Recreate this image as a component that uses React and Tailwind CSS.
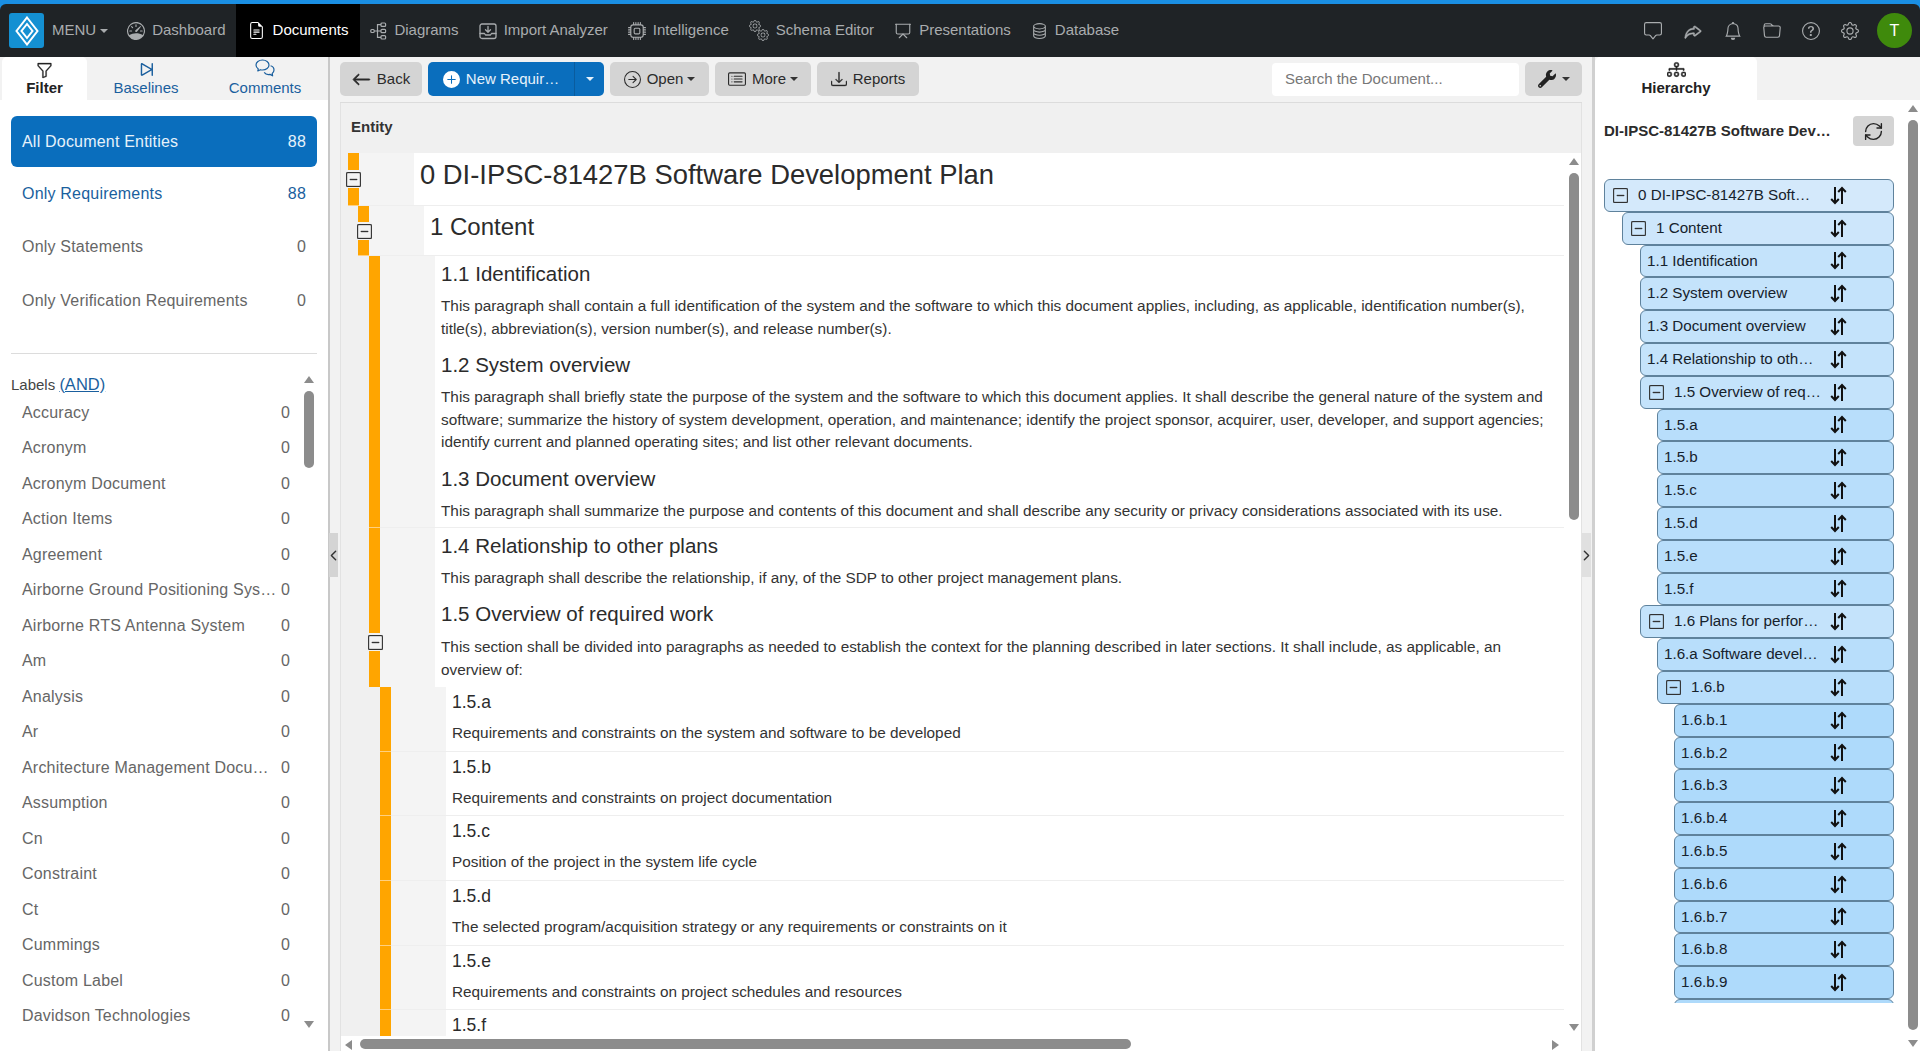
import React from 'react';
import {
    BsArrowLeft, BsArrowRightCircle, BsBell, BsCardList, BsChatSquare, BsCpu, BsDashSquare,
    BsDatabase, BsDiagram3, BsDownload, BsFileEarmarkText, BsFolder, BsFunnel, BsGear, BsPlusCircleFill,
    BsQuestionCircle, BsReply, BsSkipEnd, BsSpeedometer,
} from 'react-icons/bs';
import { FaWrench } from 'react-icons/fa';
import { LuChevronLeft, LuChevronRight, LuPresentation, LuRefreshCw } from 'react-icons/lu';

const labels = ['Accuracy', 'Acronym', 'Acronym Document', 'Action Items', 'Agreement', 'Airborne Ground Positioning Sys…',
    'Airborne RTS Antenna System', 'Am', 'Analysis', 'Ar', 'Architecture Management Docu…', 'Assumption', 'Cn', 'Constraint',
    'Ct', 'Cummings', 'Custom Label', 'Davidson Technologies'];

const tree = [
    [0, '0 DI-IPSC-81427B Soft…', true], [1, '1 Content', true], [2, '1.1 Identification'], [2, '1.2 System overview'],
    [2, '1.3 Document overview'], [2, '1.4 Relationship to oth…'], [2, '1.5 Overview of req…', true], [3, '1.5.a'], [3, '1.5.b'],
    [3, '1.5.c'], [3, '1.5.d'], [3, '1.5.e'], [3, '1.5.f'], [2, '1.6 Plans for perfor…', true], [3, '1.6.a Software devel…'],
    [3, '1.6.b', true], [4, '1.6.b.1'], [4, '1.6.b.2'], [4, '1.6.b.3'], [4, '1.6.b.4'], [4, '1.6.b.5'], [4, '1.6.b.6'],
    [4, '1.6.b.7'], [4, '1.6.b.8'], [4, '1.6.b.9'],
];

const treeLevel = [
    'ml-[0px] bg-[#d4e9fb]',
    'ml-[18px] bg-[#cde6fb]',
    'ml-[36px] bg-[#c4e3fb]',
    'ml-[53px] bg-[#b8defb]',
    'ml-[70px] bg-[#aedafb]',
];

const docLevel = ['pl-[7px]', 'pl-[17px]', 'pl-[28px]', 'pl-[39px]'];

const subItems = [
    ['1.5.a', 'Requirements and constraints on the system and software to be developed'],
    ['1.5.b', 'Requirements and constraints on project documentation'],
    ['1.5.c', 'Position of the project in the system life cycle'],
    ['1.5.d', 'The selected program/acquisition strategy or any requirements or constraints on it'],
    ['1.5.e', 'Requirements and constraints on project schedules and resources'],
    ['1.5.f', ''],
];

function Caret({ className = '' }) {
    return <span className={'inline-block w-0 h-0 border-l-[4px] border-r-[4px] border-t-[4px] border-l-transparent border-r-transparent ' + className} />;
}

function Logo() {
    return (
        <div className="w-[35px] h-[35px] ml-[9px] bg-[#1490d2] rounded-[3px] flex items-center justify-center">
            <svg width="24" height="30" viewBox="0 0 24 30" fill="none" stroke="white" strokeWidth="2">
                <path d="M12 1.5 L22.5 15 L12 28.5 L1.5 15 Z" />
                <path d="M12 8 L17.5 15 L12 22 L6.5 15 Z" />
            </svg>
        </div>
    );
}

function DiagramIcon() {
    return (
        <svg width="17" height="18" viewBox="0 0 17 18" fill="none" stroke="currentColor" strokeWidth="1.2">
            <rect x="0.8" y="7.5" width="3.4" height="3" rx="1" />
            <rect x="11" y="1" width="4.6" height="3.4" rx="1" />
            <rect x="11" y="7.3" width="4.6" height="3.4" rx="1" />
            <rect x="11" y="13.6" width="4.6" height="3.4" rx="1" />
            <path d="M4.2 9 H11 M7.5 9 V2.7 H11 M7.5 9 V15.3 H11" />
        </svg>
    );
}

function ImportIcon() {
    return (
        <svg width="18" height="18" viewBox="0 0 18 18" fill="none" stroke="currentColor" strokeWidth="1.3" strokeLinecap="round" strokeLinejoin="round">
            <rect x="1" y="2" width="16" height="14.5" rx="2" />
            <path d="M1 11.5 H5.5 L6.5 13 H11.5 L12.5 11.5 H17 M9 4.5 V10 M6.5 7.8 L9 10.3 L11.5 7.8" />
        </svg>
    );
}

function GearsIcon() {
    return (
        <span className="flex w-[20px] h-[21px]">
            <BsGear size={12} className="shrink-0" />
            <BsGear size={12} className="shrink-0 mt-[9px] -ml-[4px]" />
        </span>
    );
}

function CommentsIcon() {
    return (
        <svg width="20" height="20" viewBox="0 0 20 20" fill="none" stroke="#1a5f9e" strokeWidth="1.2" strokeLinejoin="round">
            <path d="M7.5 1 C3.8 1 1 3.2 1 6 C1 7.6 1.9 9 3.3 9.9 L2.8 12 L5.4 10.7 C6 10.9 6.8 11 7.5 11 C11.2 11 14 8.8 14 6 C14 3.2 11.2 1 7.5 1 Z" />
            <path d="M15.6 6.8 C17.9 7.5 19 9 19 11 C19 12.4 18.3 13.6 17.2 14.4 L17.6 16.8 L15 15.4 C12.8 15.8 10.4 15.2 9.2 13.4" />
        </svg>
    );
}

function SortIcon() {
    return (
        <svg width="17" height="19" viewBox="0 0 17 19" fill="none" stroke="#111" strokeWidth="2" className="mr-[46px] shrink-0">
            <path d="M5 1 V17 M1.2 13 L5 17 L8.8 13" />
            <path d="M12 18 V2 M8.2 6 L12 2 L15.8 6" />
        </svg>
    );
}

function NavItem({ icon, label, active }) {
    return (
        <div className={active
            ? 'h-full flex items-center gap-[8px] px-[12px] bg-black text-white'
            : 'h-full flex items-center gap-[7px] px-[10px] text-[#a9acae]'}>
            {icon}
            <span>{label}</span>
        </div>
    );
}

function TopBar() {
    return (
        <div className="bg-[#1a8fe3] pt-[4px] shrink-0">
            <div className="h-[53px] bg-[#1f2326] rounded-t-[6px] flex items-stretch text-[15px]">
                <div className="flex items-center">
                    <Logo />
                    <span className="ml-[8px] text-[#a9acae]">MENU</span>
                    <Caret className="ml-[4px] border-t-[#a9acae]" />
                </div>
                <div className="flex items-stretch ml-[9px]">
                    <NavItem icon={<BsSpeedometer size={18} />} label="Dashboard" />
                    <NavItem icon={<BsFileEarmarkText size={17} />} label="Documents" active />
                    <NavItem icon={<DiagramIcon />} label="Diagrams" />
                    <NavItem icon={<ImportIcon />} label="Import Analyzer" />
                    <NavItem icon={<BsCpu size={18} />} label="Intelligence" />
                    <NavItem icon={<GearsIcon />} label="Schema Editor" />
                    <NavItem icon={<LuPresentation size={18} strokeWidth={1.5} />} label="Presentations" />
                    <NavItem icon={<BsDatabase size={17} />} label="Database" />
                </div>
                <div className="ml-auto flex items-center text-[#a9acae] gap-[21px] pr-[8px]">
                    <BsChatSquare size={18} />
                    <BsReply size={20} strokeWidth={0.4} stroke="currentColor" className="-scale-x-100" />
                    <BsBell size={18} />
                    <BsFolder size={18} />
                    <BsQuestionCircle size={18} />
                    <BsGear size={18} />
                    <div className="w-[35px] h-[35px] -ml-[3px] rounded-full bg-[#3f8a0c] text-white flex items-center justify-center text-[16px]">T</div>
                </div>
            </div>
        </div>
    );
}

function PanelTab({ icon, label, active, className = '' }) {
    return (
        <div className={'h-[43px] flex flex-col items-center justify-end pb-[4px] leading-[17px] text-[15px] ' + className + (active ? ' bg-white rounded-t-[5px] font-bold text-[#222]' : ' text-[#1a5f9e]')}>
            {icon}
            <span>{label}</span>
        </div>
    );
}

function Arrow({ dir, className = '' }) {
    if (dir === 'up') return <span className={'absolute w-0 h-0 border-l-[5px] border-r-[5px] border-b-[7px] border-l-transparent border-r-transparent border-b-[#8c8c8c] ' + className} />;
    if (dir === 'down') return <span className={'absolute w-0 h-0 border-l-[5px] border-r-[5px] border-t-[7px] border-l-transparent border-r-transparent border-t-[#8c8c8c] ' + className} />;
    if (dir === 'left') return <span className={'absolute w-0 h-0 border-t-[5px] border-b-[5px] border-r-[7px] border-t-transparent border-b-transparent border-r-[#8c8c8c] ' + className} />;
    return <span className={'absolute w-0 h-0 border-t-[5px] border-b-[5px] border-l-[7px] border-t-transparent border-b-transparent border-l-[#8c8c8c] ' + className} />;
}

function FilterRow({ label, count, active, blue }) {
    let color = 'h-[53.5px] text-[#666]';
    if (active) color = 'h-[51px] bg-[#0a6ebd] text-[#e6f2fb] rounded-[6px]';
    if (blue) color = 'h-[53.5px] text-[#1a5f9e]';
    return (
        <div className={'flex items-center justify-between pl-[11px] pr-[11px] ' + color}>
            <span>{label}</span>
            <span>{count}</span>
        </div>
    );
}

function LeftPanel() {
    return (
        <div className="w-[328px] shrink-0 relative overflow-hidden bg-white">
            <div className="h-[43px] bg-[#f2f2f2] flex pl-[2px]">
                <PanelTab active className="w-[85px]" icon={<BsFunnel size={17} strokeWidth={0.3} stroke="currentColor" className="text-[#222]" />} label="Filter" />
                <PanelTab className="w-[118px]" icon={<BsSkipEnd size={23} className="-my-[2px]" />} label="Baselines" />
                <PanelTab className="w-[120px]" icon={<CommentsIcon />} label="Comments" />
            </div>
            <div className="pt-[16px] px-[11px] text-[16px] tracking-[0.2px]">
                <FilterRow label="All Document Entities" count="88" active />
                <FilterRow label="Only Requirements" count="88" blue />
                <FilterRow label="Only Statements" count="0" />
                <FilterRow label="Only Verification Requirements" count="0" />
                <div className="mt-[25.5px] border-t border-[#dcdcdc]" />
                <div className="mt-[18.5px] h-[22px] leading-[22px] text-[#444] text-[15px] tracking-normal">
                    Labels <span className="text-[#1a5f9e] underline text-[16.5px]">(AND)</span>
                </div>
                <div className="pt-[0.5px]">
                    {labels.map((l) => (
                        <div key={l} className="h-[35.5px] flex items-center justify-between pl-[11px] w-[279px] text-[#666]">
                            <span className="whitespace-nowrap">{l}</span>
                            <span>0</span>
                        </div>
                    ))}
                </div>
            </div>
            <Arrow dir="up" className="left-[304px] top-[319px]" />
            <div className="absolute left-[304px] top-[334px] w-[10px] h-[77px] rounded-full bg-[#8c8c8c]" />
            <Arrow dir="down" className="left-[304px] top-[964px]" />
        </div>
    );
}

function ToolButton({ children, className = '' }) {
    return <div className={'h-[34px] rounded-[5px] bg-[#d4d4d4] text-[#2b2b2b] flex items-center justify-center gap-[6px] ' + className}>{children}</div>;
}

function Toolbar() {
    return (
        <div className="h-[45px] shrink-0 pl-[10px] pr-[10px] pt-[5px] flex gap-[6px] text-[15px]">
            <ToolButton className="w-[82px]"><BsArrowLeft size={19} strokeWidth={0.7} stroke="currentColor" />Back</ToolButton>
            <div className="w-[176px] h-[34px] rounded-[5px] bg-[#0a6ebd] text-[#e6f2fb] flex items-center">
                <div className="w-[146px] flex items-center justify-center gap-[6px]">
                    <BsPlusCircleFill size={17} className="text-white" />New Requir…
                </div>
                <div className="flex-1 h-full border-l border-[#0a5c9e] flex items-center justify-center">
                    <Caret className="border-t-[#e6f2fb]" />
                </div>
            </div>
            <ToolButton className="w-[99px]"><BsArrowRightCircle size={17} />Open<Caret className="-ml-[2px] border-t-[#333]" /></ToolButton>
            <ToolButton className="w-[96px]"><BsCardList size={18} />More<Caret className="-ml-[2px] border-t-[#333]" /></ToolButton>
            <ToolButton className="w-[102px]"><BsDownload size={16} strokeWidth={0.4} stroke="currentColor" />Reports</ToolButton>
            <div className="ml-auto w-[247px] h-[33px] mt-[1px] rounded-[4px] bg-white pl-[13px] flex items-center text-[#777]">Search the Document...</div>
            <ToolButton className="w-[57px]"><FaWrench size={18} className="text-[#222]" /><Caret className="border-t-[#333]" /></ToolButton>
        </div>
    );
}

function Toggle({ className = '' }) {
    return (
        <span className={'absolute flex items-center justify-center w-[15px] h-[18px] bg-[#f2f2f2] ' + className}>
            <BsDashSquare size={15} strokeWidth={0.4} stroke="currentColor" className="text-[#333]" />
        </span>
    );
}

function DocRow({ level, toggle, className = '', border = true, children }) {
    return (
        <div className={'relative flex mr-[17px] bg-[#f0f0f0] ' + docLevel[level] + ' ' + className}>
            <div className={'w-[11px] shrink-0 bg-[#ffa500] relative ' + (border ? 'border-b border-[#ffd080]' : '')}>{toggle}</div>
            <div className={'w-[55px] shrink-0 bg-[#f4f4f4] ' + (border ? 'border-b border-[#eeeeee]' : '')} />
            <div className={'flex-1 bg-white pl-[6px] min-w-0 ' + (border ? 'border-b border-[#eeeeee]' : '')}>{children}</div>
        </div>
    );
}

function H2({ children }) {
    return <div className="h-[36px] leading-[36px] text-[20.5px] text-[#2b2b2b]">{children}</div>;
}

function Para({ children, className = 'mb-[7px]' }) {
    return <div className={'mt-[3px] leading-[22.6px] text-[15.33px] text-[#333] whitespace-nowrap ' + className}>{children}</div>;
}

function DocumentBody() {
    return (
        <div className="flex-1 min-h-0 relative bg-white border-l border-r border-[#e2e2e2] flex flex-col">
            <div className="h-[50px] shrink-0 bg-[#f0f0f0] flex items-center pl-[10px] pb-[2px] font-bold text-[15px] text-[#333]">Entity</div>
            <div className="h-[883px] overflow-hidden bg-white">
                <DocRow level={0} className="h-[53px]" toggle={<Toggle className="-left-[2px] top-[17px]" />}>
                    <div className="leading-[44px] text-[27.4px] text-[#2b2b2b] whitespace-nowrap">0 DI-IPSC-81427B Software Development Plan</div>
                </DocRow>
                <DocRow level={1} className="h-[50px]" toggle={<Toggle className="-left-[1px] top-[16px]" />}>
                    <div className="leading-[41px] text-[24px] text-[#2b2b2b]">1 Content</div>
                </DocRow>
                <DocRow level={2} className="h-[272px]">
                    <H2>1.1 Identification</H2>
                    <Para>This paragraph shall contain a full identification of the system and the software to which this document applies, including, as applicable, identification number(s),<br />title(s), abbreviation(s), version number(s), and release number(s).</Para>
                    <H2>1.2 System overview</H2>
                    <Para>This paragraph shall briefly state the purpose of the system and the software to which this document applies. It shall describe the general nature of the system and<br />software; summarize the history of system development, operation, and maintenance; identify the project sponsor, acquirer, user, developer, and support agencies;<br />identify current and planned operating sites; and list other relevant documents.</Para>
                    <H2>1.3 Document overview</H2>
                    <Para className="mb-0">This paragraph shall summarize the purpose and contents of this document and shall describe any security or privacy considerations associated with its use.</Para>
                </DocRow>
                <DocRow level={2} className="h-[68px]" border={false}>
                    <H2>1.4 Relationship to other plans</H2>
                    <Para className="mb-0">This paragraph shall describe the relationship, if any, of the SDP to other project management plans.</Para>
                </DocRow>
                <DocRow level={2} className="h-[91px]" border={false} toggle={<Toggle className="-left-[1px] top-[37px]" />}>
                    <H2>1.5 Overview of required work</H2>
                    <Para className="mb-0 !mt-[4px]">This section shall be divided into paragraphs as needed to establish the context for the planning described in later sections. It shall include, as applicable, an<br />overview of:</Para>
                </DocRow>
                {subItems.map(([title, text]) => (
                    <DocRow key={title} level={3} className="h-[64.7px]">
                        <div className="h-[31px] leading-[31px] text-[17.5px] text-[#2b2b2b]">{title}</div>
                        <div className="mt-[4px] leading-[22px] text-[15.33px] text-[#333] whitespace-nowrap">{text}</div>
                    </DocRow>
                ))}
            </div>
            <div className="flex-1 bg-white" />
            <Arrow dir="up" className="left-[1228px] top-[55px]" />
            <div className="absolute left-[1228px] top-[70px] w-[10px] h-[347px] rounded-full bg-[#8c8c8c]" />
            <Arrow dir="down" className="left-[1228px] top-[921px]" />
            <Arrow dir="left" className="left-[4px] top-[937px]" />
            <div className="absolute left-[19px] top-[936px] w-[771px] h-[10px] rounded-full bg-[#8c8c8c]" />
            <Arrow dir="right" className="left-[1211px] top-[937px]" />
        </div>
    );
}

function TreeRow({ level, label, open }) {
    return (
        <div className={'h-[32.8px] flex items-center rounded-[6px] border border-[#5f829c] text-[15.2px] text-[#16222c] ' + treeLevel[level] + (open ? ' pl-[8px]' : ' pl-[6px]')}>
            {open && <BsDashSquare size={15} strokeWidth={0.4} stroke="currentColor" className="mr-[10px] text-[#333] shrink-0" />}
            <span className="flex-1 whitespace-nowrap">{label}</span>
            <SortIcon />
        </div>
    );
}

function RightPanel() {
    return (
        <div className="flex-1 relative overflow-hidden bg-white border-l-[3px] border-[#d0d0d0]">
            <div className="h-[43px] bg-[#f2f2f2]">
                <PanelTab active className="w-[162px]" icon={<BsDiagram3 size={19} strokeWidth={0.4} stroke="currentColor" className="text-[#222]" />} label="Hierarchy" />
            </div>
            <div className="pl-[9px] pr-[26px]">
                <div className="h-[30px] mt-[16px] flex items-center justify-between font-bold text-[15px] text-[#2b2b2b]">
                    <span className="whitespace-nowrap">DI-IPSC-81427B Software Dev…</span>
                    <div className="w-[41px] h-[30px] rounded-[4px] bg-[#d4d4d4] flex items-center justify-center">
                        <LuRefreshCw size={21} strokeWidth={1.6} className="text-[#222]" />
                    </div>
                </div>
                <div className="mt-[33px] h-[824px] overflow-hidden">
                    {tree.map(([level, label, open]) => <TreeRow key={label} level={level} label={label} open={open} />)}
                    <div className="ml-[70px] h-[33px] rounded-[6px] border border-[#5f829c] bg-[#aedafb]" />
                </div>
            </div>
            <Arrow dir="up" className="left-[313px] top-[48px]" />
            <div className="absolute left-[313px] top-[63px] w-[10px] h-[910px] rounded-full bg-[#8c8c8c]" />
            <Arrow dir="down" className="left-[313px] top-[983px]" />
        </div>
    );
}

export default function App() {
    return (
        <div className="w-[1920px] h-[1051px] overflow-hidden flex flex-col bg-[#f2f2f2] font-['Liberation_Sans',Arial,sans-serif]">
            <TopBar />
            <div className="flex-1 min-h-0 flex">
                <LeftPanel />
                <div className="w-[1264px] shrink-0 relative flex flex-col border-l-[2px] border-[#c8c8c8]">
                    <Toolbar />
                    <div className="flex-1 min-h-0 ml-[10px] mr-[10px] flex flex-col border-t border-[#dcdcdc]">
                        <DocumentBody />
                    </div>
                    <div className="absolute -left-[1px] top-[476px] w-[9px] h-[44px] bg-[#d4d4d4] flex items-center justify-center">
                        <LuChevronLeft size={17} className="shrink-0 text-[#333]" />
                    </div>
                    <div className="absolute right-[1px] top-[476px] w-[9px] h-[44px] bg-[#e0e0e0] flex items-center justify-center">
                        <LuChevronRight size={17} className="shrink-0 text-[#333]" />
                    </div>
                </div>
                <RightPanel />
            </div>
        </div>
    );
}
